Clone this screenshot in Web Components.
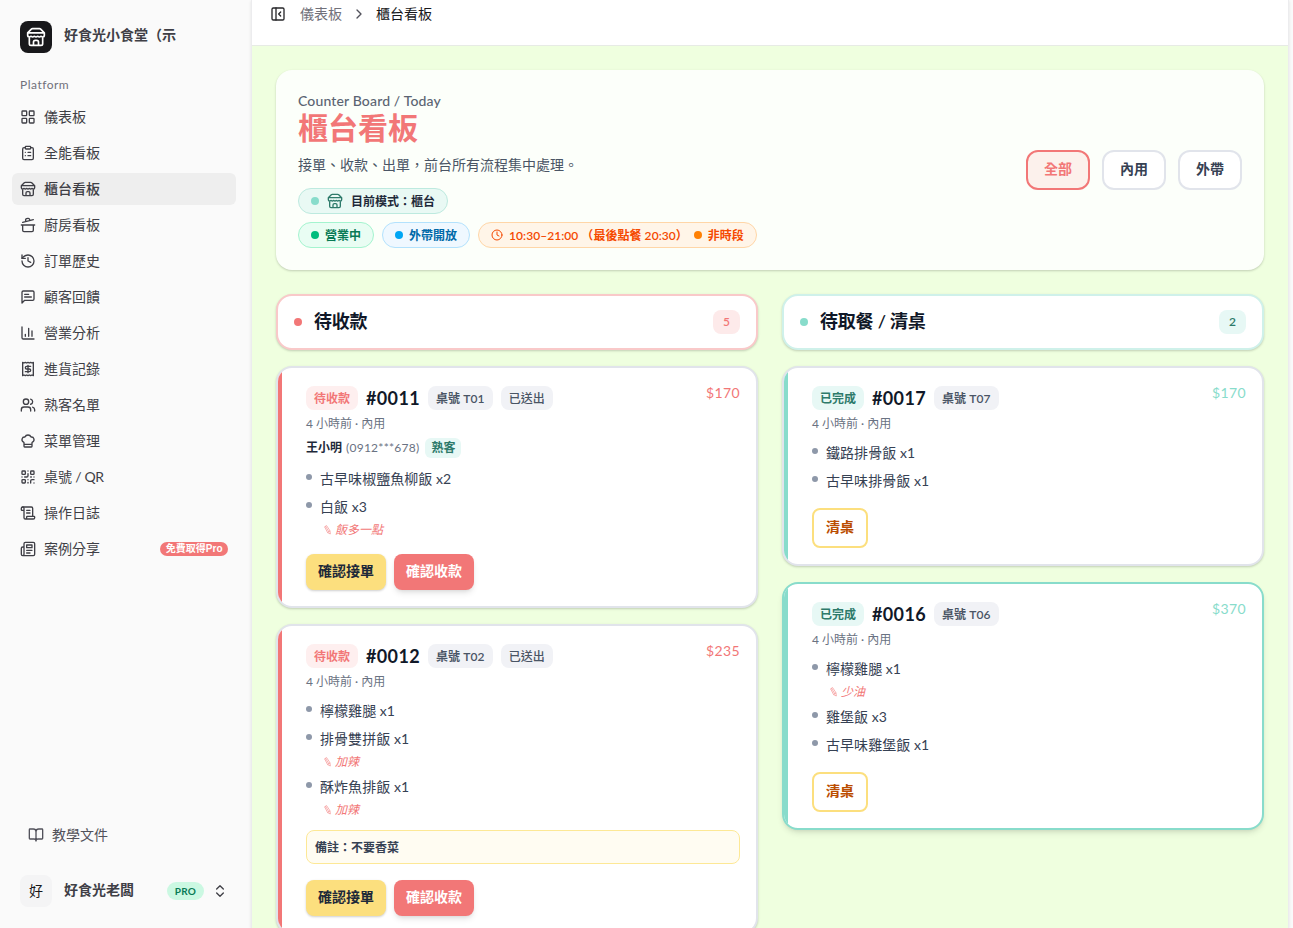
<!DOCTYPE html>
<html lang="zh-Hant">
<head>
<meta charset="utf-8">
<title>櫃台看板</title>
<style>
  * { box-sizing: border-box; }
  html, body { margin: 0; height: 100%; overflow: hidden; }
  body {
    display: flex;
    background: #fafafa;
    color: #364153;
    font: 14px/20px Lato, "Noto Sans CJK TC", sans-serif;
    --coral: #f27777;
    --mint: #88dccb;
  }
  .latin { letter-spacing: -.35px; }
</style>
</head>
<body>

<app-sidebar>
  <nav-item icon="grid">儀表板</nav-item>
  <nav-item icon="clipboard">全能看板</nav-item>
  <nav-item icon="store" active>櫃台看板</nav-item>
  <nav-item icon="pot">廚房看板</nav-item>
  <nav-item icon="history">訂單歷史</nav-item>
  <nav-item icon="message">顧客回饋</nav-item>
  <nav-item icon="chart">營業分析</nav-item>
  <nav-item icon="receipt">進貨記錄</nav-item>
  <nav-item icon="users">熟客名單</nav-item>
  <nav-item icon="chef">菜單管理</nav-item>
  <nav-item icon="qr">桌號<span class="latin"> / QR</span></nav-item>
  <nav-item icon="scroll">操作日誌</nav-item>
  <nav-item icon="news" badge="免費取得Pro">案例分享</nav-item>
</app-sidebar>

<board-page>
  <board-hero></board-hero>
  <board-column tone="coral" label="待收款" count="5">
    <order-card tone="coral" status="待收款" no="#0011" table="T01" sent price="$170" customer="王小明" phone="(0912***678)">
      <order-item>古早味椒鹽魚柳飯 x2</order-item>
      <order-item note="飯多一點">白飯 x3</order-item>
      <action-button slot="actions" kind="accept">確認接單</action-button>
      <action-button slot="actions" kind="pay">確認收款</action-button>
    </order-card>
    <order-card tone="coral" status="待收款" no="#0012" table="T02" sent price="$235" memo="備註：不要香菜">
      <order-item>檸檬雞腿 x1</order-item>
      <order-item note="加辣">排骨雙拼飯 x1</order-item>
      <order-item note="加辣">酥炸魚排飯 x1</order-item>
      <action-button slot="actions" kind="accept">確認接單</action-button>
      <action-button slot="actions" kind="pay">確認收款</action-button>
    </order-card>
  </board-column>
  <board-column tone="mint" label="待取餐 / 清桌" count="2">
    <order-card tone="mint" status="已完成" no="#0017" table="T07" price="$170">
      <order-item>鐵路排骨飯 x1</order-item>
      <order-item>古早味排骨飯 x1</order-item>
      <action-button slot="actions" kind="clear">清桌</action-button>
    </order-card>
    <order-card tone="mint" focused status="已完成" no="#0016" table="T06" price="$370">
      <order-item note="少油">檸檬雞腿 x1</order-item>
      <order-item>雞堡飯 x3</order-item>
      <order-item>古早味雞堡飯 x1</order-item>
      <action-button slot="actions" kind="clear">清桌</action-button>
    </order-card>
  </board-column>
</board-page>

<script>
(() => {
  // 24x24 stroke icons
  const ICONS = {
    grid: '<rect x="3" y="3" width="7" height="7" rx="1"/><rect x="14" y="3" width="7" height="7" rx="1"/><rect x="14" y="14" width="7" height="7" rx="1"/><rect x="3" y="14" width="7" height="7" rx="1"/>',
    clipboard: '<rect width="8" height="4" x="8" y="2" rx="1"/><path d="M16 4h2a2 2 0 0 1 2 2v14a2 2 0 0 1-2 2H6a2 2 0 0 1-2-2V6a2 2 0 0 1 2-2h2M12 11h4M12 16h4M8 11h.01M8 16h.01"/>',
    store: '<path d="m2 7 4.41-4.41A2 2 0 0 1 7.83 2h8.34a2 2 0 0 1 1.42.59L22 7M4 12v8a2 2 0 0 0 2 2h12a2 2 0 0 0 2-2v-8M15 22v-4a2 2 0 0 0-2-2h-2a2 2 0 0 0-2 2v4M2 7h20M22 7v3a2 2 0 0 1-2 2 2.7 2.7 0 0 1-1.59-.63.7.7 0 0 0-.82 0A2.7 2.7 0 0 1 16 12a2.7 2.7 0 0 1-1.59-.63.7.7 0 0 0-.82 0A2.7 2.7 0 0 1 12 12a2.7 2.7 0 0 1-1.59-.63.7.7 0 0 0-.82 0A2.7 2.7 0 0 1 8 12a2.7 2.7 0 0 1-1.59-.63.7.7 0 0 0-.82 0A2.7 2.7 0 0 1 4 12a2 2 0 0 1-2-2V7"/>',
    pot: '<path d="M2 12h20M20 12v8a2 2 0 0 1-2 2H6a2 2 0 0 1-2-2v-8M4 8l16-4M8.86 6.78l-.45-1.81a2 2 0 0 1 1.45-2.43l1.94-.48a2 2 0 0 1 2.43 1.46l.45 1.8"/>',
    history: '<path d="M3 12a9 9 0 1 0 9-9 9.75 9.75 0 0 0-6.74 2.74L3 8"/><path d="M3 3v5h5M12 7v5l4 2"/>',
    message: '<path d="M21 15a2 2 0 0 1-2 2H7l-4 4V5a2 2 0 0 1 2-2h14a2 2 0 0 1 2 2zM13 8H7M17 12H7"/>',
    chart: '<path d="M3 3v16a2 2 0 0 0 2 2h16M18 17V9M13 17V5M8 17v-3"/>',
    receipt: '<path d="M4 2v20l2-1 2 1 2-1 2 1 2-1 2 1 2-1 2 1V2l-2 1-2-1-2 1-2-1-2 1-2-1-2 1Z"/><path d="M16 8h-6a2 2 0 1 0 0 4h4a2 2 0 1 1 0 4H8M12 17.5v-11"/>',
    users: '<path d="M16 21v-2a4 4 0 0 0-4-4H6a4 4 0 0 0-4 4v2"/><circle cx="9" cy="7" r="4"/><path d="M22 21v-2a4 4 0 0 0-3-3.87M16 3.13a4 4 0 0 1 0 7.75"/>',
    chef: '<path d="M17 21a1 1 0 0 0 1-1v-5.35c0-.457.316-.844.727-1.041a4 4 0 0 0-2.134-7.589 5 5 0 0 0-9.186 0 4 4 0 0 0-2.134 7.588c.411.198.727.585.727 1.041V20a1 1 0 0 0 1 1ZM6 17h12"/>',
    qr: '<rect width="5" height="5" x="3" y="3" rx="1"/><rect width="5" height="5" x="16" y="3" rx="1"/><rect width="5" height="5" x="3" y="16" rx="1"/><path d="M21 16h-3a2 2 0 0 0-2 2v3M21 21v.01M12 7v3a2 2 0 0 1-2 2H7M3 12h.01M12 3h.01M12 16v.01M16 12h1M21 12v.01M12 21v-1"/>',
    scroll: '<path d="M15 12h-5M15 8h-5M19 17V5a2 2 0 0 0-2-2H4"/><path d="M8 21h12a2 2 0 0 0 2-2v-1a1 1 0 0 0-1-1H11a1 1 0 0 0-1 1v1a2 2 0 1 1-4 0V5a2 2 0 1 0-4 0v2a1 1 0 0 0 1 1h3"/>',
    news: '<path d="M4 22h16a2 2 0 0 0 2-2V4a2 2 0 0 0-2-2H8a2 2 0 0 0-2 2v16a2 2 0 0 1-2 2Zm0 0a2 2 0 0 1-2-2v-9c0-1.1.9-2 2-2h2M18 14h-8M15 18h-5M10 6h8v4h-8V6Z"/>',
    book: '<path d="M12 7v14M3 18a1 1 0 0 1-1-1V4a1 1 0 0 1 1-1h5a4 4 0 0 1 4 4 4 4 0 0 1 4-4h5a1 1 0 0 1 1 1v13a1 1 0 0 1-1 1h-6a3 3 0 0 0-3 3 3 3 0 0 0-3-3z"/>',
    updown: '<path d="m7 15 5 5 5-5M7 9l5-5 5 5"/>',
    panel: '<rect width="18" height="18" x="3" y="3" rx="2"/><path d="M9 3v18M16 15l-3-3 3-3"/>',
    right: '<path d="m9 18 6-6-6-6"/>',
    clock: '<circle cx="12" cy="12" r="10"/><path d="M12 6v6l4 2"/>'
  };

  class BaseElement extends HTMLElement {
    connectedCallback() {
      if (this.shadowRoot) return;
      this.attachShadow({ mode: 'open' }).innerHTML =
        '<style>*{box-sizing:border-box}' + this.css() + '</style>' + this.html();
    }
    attr(name) { return this.getAttribute(name) || ''; }
  }

  class UiIcon extends BaseElement {
    css() {
      return ':host{display:block;flex:none;width:16px;height:16px}svg{display:block;width:100%;height:100%}';
    }
    html() {
      return '<svg viewBox="0 0 24 24" fill="none" stroke="currentColor" stroke-width="2" ' +
        'stroke-linecap="round" stroke-linejoin="round">' + ICONS[this.attr('name')] + '</svg>';
    }
  }

  class NavItem extends BaseElement {
    css() {
      return `
        :host { display: flex; align-items: center; gap: 8px; height: 32px; padding: 0 8px; border-radius: 6px; color: #3f3f46; }
        :host([active]) { background: #eeeeee; font-weight: 500; }
        .label { flex: 1; padding-bottom: 1px; }
        .badge { background: var(--coral); color: #fff; font: bold 10px/14px "Liberation Sans", "Noto Sans CJK TC", sans-serif;
          padding: 0 5.5px; border-radius: 7px; }
      `;
    }
    html() {
      const badge = this.attr('badge');
      return `<ui-icon name="${this.attr('icon')}"></ui-icon><span class="label"><slot></slot></span>` +
        (badge ? `<span class="badge">${badge}</span>` : '');
    }
  }

  class AppSidebar extends BaseElement {
    css() {
      return `
        :host { display: flex; flex-direction: column; flex: none; width: 251px; height: 928px; padding: 21px 15px 21px 12px; color: #3f3f46; }
        .brand, .user { display: flex; align-items: center; gap: 12px; padding: 0 8px; font-weight: 600; }
        .logo { display: grid; place-items: center; width: 32px; height: 32px; border-radius: 8px; background: #18181b; color: #fff; }
        .logo ui-icon { width: 20px; height: 20px; }
        .brand span { padding-bottom: 4px; }
        .group { margin: 16px 8px 0; height: 32px; font-size: 12px; line-height: 32px; color: #71717a; letter-spacing: .5px; }
        nav { display: grid; gap: 4px; }
        .docs { display: flex; align-items: center; gap: 8px; margin-top: auto; padding: 0 16px; height: 32px; color: #52525b; }
        .user { margin-top: 24px; padding-right: 8px; }
        .avatar { display: grid; place-items: center; width: 32px; height: 32px; border-radius: 8px; background: #f4f4f5; color: #18181b; font-weight: 400; }
        .name { flex: 1; padding-bottom: 2px; }
        .pro { padding: 0 8px; border-radius: 9px; background: #cbf8e2; color: #087a55; font-size: 10px; line-height: 18px; font-weight: 700; letter-spacing: .2px; }
        .user ui-icon { margin-left: -4px; }
      `;
    }
    html() {
      return `
        <div class="brand"><div class="logo"><ui-icon name="store"></ui-icon></div><span>好食光小食堂（示</span></div>
        <div class="group">Platform</div>
        <nav><slot></slot></nav>
        <div class="docs"><ui-icon name="book"></ui-icon>教學文件</div>
        <div class="user"><div class="avatar">好</div><span class="name">好食光老闆</span>
          <span class="pro">PRO</span><ui-icon name="updown"></ui-icon></div>
      `;
    }
  }

  class BoardPage extends BaseElement {
    css() {
      return `
        :host { display: flex; flex-direction: column; width: 1038px; height: 928px; border: solid #ececee; border-width: 0 1px; background: #efffdf; box-shadow: 0 1px 3px #0000001a; overflow: hidden; }
        header { display: flex; flex: none; align-items: center; height: 46px; padding: 0 18px 17px; background: #fff; border-bottom: 1px solid #e7ebe5; color: #71717a; }
        header ui-icon { color: #27272a; }
        header span { margin-left: 14px; }
        header .sep { margin-left: 9px; color: #52525b; }
        header .here { margin-left: 9px; color: #18181b; }
        main { display: grid; grid-template-columns: 1fr 1fr; align-items: start; gap: 24px; padding: 24px; }
      `;
    }
    html() {
      return `
        <header><ui-icon name="panel"></ui-icon><span>儀表板</span>
          <ui-icon class="sep" name="right"></ui-icon><span class="here">櫃台看板</span></header>
        <main><slot></slot></main>
      `;
    }
  }

  class BoardHero extends BaseElement {
    css() {
      return `
        :host { grid-column: 1 / -1; display: flex; justify-content: space-between; align-items: center; height: 200px; padding: 22px; border-radius: 16px; background: #fcfffa; box-shadow: 0 1px 3px #0000001a, 0 1px 2px #0000001a; }
        .eyebrow { margin-top: -1px; font-weight: 500; color: #5b6472; letter-spacing: .15px; }
        h1 { margin: -2px 0 0; font-size: 30px; line-height: 36px; font-weight: 600; color: var(--coral); }
        p { margin: 10px 0 13px; color: #4a5565; }
        .row { display: flex; gap: 8px; margin-top: 8px; }
        .pill { display: flex; align-items: center; gap: 6px; height: 26px; padding: 0 12px; border: 1px solid; border-radius: 13px; font-size: 12px; line-height: 16px; font-weight: 600; }
        .pill span { padding-top: 1px; }
        .pill i { width: 8px; height: 8px; border-radius: 50%; }
        .mode { gap: 8px; background: #e9f9f4; border-color: #bdeadf; color: #1e2939; }
        .mode i { background: var(--mint); }
        .mode ui-icon { color: #2d7a6a; }
        .open { background: #e9fdf3; border-color: #a4f4cf; color: #087a55; }
        .open i { background: #00bc7d; }
        .out { background: #eff8ff; border-color: #b3e2fd; color: #0069a8; }
        .out i { background: #00a6f4; }
        .time { background: #fff5e8; border-color: #ffd6a7; color: #f54900; }
        .time i { background: #ff8104; }
        .time ui-icon { width: 12px; height: 12px; }
        .hours { letter-spacing: .05px; }
        .hours + .hours { margin-left: -3px; }
        .filters { display: flex; gap: 12px; }
        .filters span { height: 40px; padding: 0 16px; border: 2px solid #e1e4eb; border-radius: 12px; background: #fff; line-height: 34px; font-weight: 600; color: #364153; }
        .filters .on { background: #fcf1ec; border-color: var(--coral); color: var(--coral); }
      `;
    }
    html() {
      return `
        <div>
          <div class="eyebrow">Counter Board / Today</div>
          <h1>櫃台看板</h1>
          <p>接單、收款、出單，前台所有流程集中處理。</p>
          <div class="row"><div class="pill mode"><i></i><ui-icon name="store"></ui-icon><span>目前模式：櫃台</span></div></div>
          <div class="row">
            <div class="pill open"><i></i><span>營業中</span></div>
            <div class="pill out"><i></i><span>外帶開放</span></div>
            <div class="pill time"><ui-icon name="clock"></ui-icon><span class="hours">10:30–21:00</span><span class="hours">（最後點餐 20:30）</span><i></i><span>非時段</span></div>
          </div>
        </div>
        <div class="filters"><span class="on">全部</span><span>內用</span><span>外帶</span></div>
      `;
    }
  }

  class BoardColumn extends BaseElement {
    css() {
      return `
        :host { display: grid; gap: 16px; }
        .head { display: flex; align-items: center; gap: 12px; height: 56px; padding: 0 16px; border: 2px solid #f9c9c9; border-radius: 16px; background: #fff; box-shadow: 0 1px 3px #0000001a, 0 1px 2px #0000001a; }
        i { width: 8px; height: 8px; border-radius: 50%; background: var(--coral); }
        h2 { flex: 1; margin: 0; padding-bottom: 2px; font-size: 18px; line-height: 28px; font-weight: 600; letter-spacing: -.2px; color: #101828; }
        .count { min-width: 27px; border-radius: 8px; background: #fdeaea; color: var(--coral); font-size: 12px; line-height: 24px; font-weight: 600; text-align: center; }
        :host([tone=mint]) .head { border-color: #cff1ea; }
        :host([tone=mint]) i { background: var(--mint); }
        :host([tone=mint]) .count { background: #e7f8f5; color: #2d7a6a; }
      `;
    }
    html() {
      return `<div class="head"><i></i><h2>${this.attr('label')}</h2><span class="count">${this.attr('count')}</span></div><slot></slot>`;
    }
  }

  class OrderCard extends BaseElement {
    css() {
      return `
        :host { --tone: var(--coral); position: relative; display: block; padding: 16px 16px 16px 28px; border: 2px solid #e1e4eb; border-radius: 16px; background: #fff; overflow: hidden; box-shadow: 0 1px 3px #0000001a, 0 1px 2px #0000001a; }
        :host([tone=mint]) { --tone: var(--mint); }
        :host([focused]) { border-color: var(--mint); box-shadow: 0 4px 6px -1px #0000001a, 0 2px 4px -2px #0000001a; }
        .bar { position: absolute; inset: 0 auto 0 0; width: 4px; background: var(--tone); }
        .top { display: flex; align-items: center; gap: 8px; height: 28px; }
        .tag { height: 24px; padding: 1px 8px 0; border-radius: 8px; background: #f1f2f6; color: #4a5565; font-size: 12px; line-height: 23px; font-weight: 600; }
        .table { letter-spacing: .1px; }
        .sent { font-weight: 500; }
        .status { background: #feefef; color: var(--coral); }
        :host([tone=mint]) .status { background: #e7f8f5; color: #2d7a6a; }
        .no { margin-top: -1px; font-size: 18px; font-weight: 700; color: #101828; letter-spacing: .35px; }
        .price { align-self: flex-start; margin: -1px 0 0 auto; color: var(--tone); letter-spacing: .4px; }
        .meta { margin-top: 4px; font-size: 12px; line-height: 16px; color: #6a7282; }
        .who { display: flex; align-items: center; gap: 4px; margin-top: 6px; height: 20px; font-size: 12px; color: #6a7282; }
        .who b { color: #1e2939; font-weight: 600; }
        .who span { letter-spacing: .25px; }
        .who em { margin-left: 2px; padding: 0 6px; border-radius: 6px; background: #e7f8f5; color: #2d7a6a; font-style: normal; font-weight: 600; line-height: 20px; }
        .items { display: grid; gap: 8px; margin-top: 12px; }
        .memo { margin-top: 12px; padding: 9px 8px 7px; border: 1px solid #fde896; border-radius: 8px; background: #fffcf2; color: #364153; font-size: 12px; line-height: 16px; font-weight: 600; }
        .actions { display: flex; gap: 8px; margin-top: 16px; }
      `;
    }
    html() {
      const who = this.hasAttribute('customer')
        ? `<div class="who"><b>${this.attr('customer')}</b><span>${this.attr('phone')}</span><em>熟客</em></div>` : '';
      const memo = this.hasAttribute('memo') ? `<div class="memo">${this.attr('memo')}</div>` : '';
      const sent = this.hasAttribute('sent') ? '<span class="tag sent">已送出</span>' : '';
      return `
        <div class="bar"></div>
        <div class="top"><span class="tag status">${this.attr('status')}</span><span class="no">${this.attr('no')}</span>
          <span class="tag table">桌號 ${this.attr('table')}</span>${sent}<span class="price">${this.attr('price')}</span></div>
        <div class="meta">4 小時前 · 內用</div>
        ${who}
        <div class="items"><slot></slot></div>
        ${memo}
        <div class="actions"><slot name="actions"></slot></div>
      `;
    }
  }

  class OrderItem extends BaseElement {
    css() {
      return `
        :host { display: block; color: #364153; }
        .line { display: flex; gap: 8px; height: 20px; line-height: 18px; }
        .line span { letter-spacing: .05px; }
        i { flex: none; width: 6px; height: 6px; margin-top: 4px; border-radius: 50%; background: #8e98a9; }
        .note { display: flex; gap: 4px; margin: 4px 0 0 18px; font-size: 12px; line-height: 16px; font-style: italic; color: var(--coral); }
        svg { width: 7px; height: 10px; margin-top: 3px; }
      `;
    }
    html() {
      const note = this.attr('note');
      // pencil pointing down and to the right
      const pencil = '<svg viewBox="0 0 7 10" fill="none" stroke="currentColor" stroke-width=".7" stroke-linejoin="round">' +
        '<path d="M.6 1.8 2.6.6 6 5.8 6.3 9 3.6 7.6ZM1.6 1.3 4.8 6.8M3.6 7.6 6 5.8" opacity=".8"/></svg>';
      return '<div class="line"><i></i><span><slot></slot></span></div>' +
        (note ? `<div class="note">${pencil}<span>${note}</span></div>` : '');
    }
  }

  class ActionButton extends BaseElement {
    css() {
      return `
        :host { display: block; height: 36px; padding: 0 12px; border-radius: 8px; line-height: 34px; font-weight: 600; }
        :host([kind=accept]) { background: #fcdf7e; color: #1e2939; box-shadow: 0 1px 3px #0000001a, 0 1px 2px #0000001a; }
        :host([kind=pay]) { background: var(--coral); color: #fff; box-shadow: 0 4px 6px -1px #0000001a, 0 2px 4px -2px #0000001a; }
        :host([kind=clear]) { height: 40px; border: 2px solid #fcdf7e; background: #fff; color: #bb4d00; }
      `;
    }
    html() { return '<slot></slot>'; }
  }

  customElements.define('ui-icon', UiIcon);
  customElements.define('nav-item', NavItem);
  customElements.define('app-sidebar', AppSidebar);
  customElements.define('board-page', BoardPage);
  customElements.define('board-hero', BoardHero);
  customElements.define('board-column', BoardColumn);
  customElements.define('order-card', OrderCard);
  customElements.define('order-item', OrderItem);
  customElements.define('action-button', ActionButton);
})();
</script>
</body>
</html>
